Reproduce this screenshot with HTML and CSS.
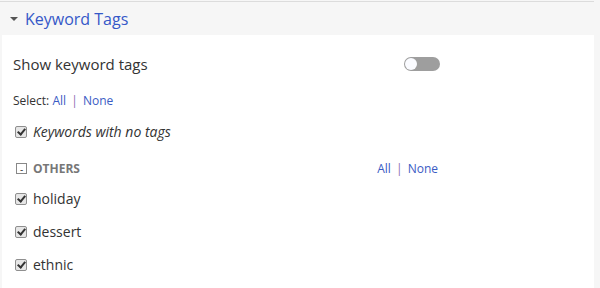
FILE: index.html
```html
<!DOCTYPE html>
<html>
<head>
  <meta charset="utf-8">
  <title>Keyword Tags</title>
  <link rel="stylesheet" href="styles.css">
</head>
<body>
  <div class="painel">
    <div class="cabecalho">
      <span class="seta"></span>
      <h2 class="titulo">Keyword Tags</h2>
    </div>

    <div class="conteudo">
      <div class="linha-toggle">
        <span class="rotulo">Show keyword tags</span>
        <span class="toggle"><span class="bolinha"></span></span>
      </div>

      <div class="selecionar">
        Select: <a class="link">All</a> <span class="sep">|</span> <a class="link">None</a>
      </div>

      <label class="item italico"><span class="caixa"></span>Keywords with no tags</label>

      <div class="grupo">
        <span class="grupo-nome"><span class="menos">-</span>OTHERS</span>
        <span class="grupo-links"><a class="link">All</a> <span class="sep">|</span> <a class="link">None</a></span>
      </div>

      <label class="item"><span class="caixa"></span>holiday</label>
      <label class="item"><span class="caixa"></span>dessert</label>
      <label class="item"><span class="caixa"></span>ethnic</label>
    </div>
  </div>
</body>
</html>
```

FILE: styles.css
```css
* {
  font-family: "Open Sans", Arial, sans-serif;
  box-sizing: border-box;
}

body {
  margin: 0;
  background-color: #f6f6f6;
  height: 288px;
  overflow: hidden;
}

.painel {
  margin-left: 2px;
  width: 592px;
  height: 288px;
  background-color: #fff;
}

.cabecalho {
  display: flex;
  align-items: center;
  height: 34px;
  padding-left: 10px;
  background-color: #f6f6f6;
  border-top: 1px solid #dcdcdc;
  margin-top: 1px;
  margin-left: -2px;
  width: 594px;
}
.seta {
  width: 0;
  height: 0;
  border-left: 4px solid transparent;
  border-right: 4px solid transparent;
  border-top: 4px solid #555;
  margin-right: 7px;
  margin-top: 1px;
}
.titulo {
  margin: 0;
  font-size: 16px;
  font-weight: 400;
  color: #3558c8;
}

.conteudo {
  width: 438px;
  padding: 0 0 0 11px;
}

.linha-toggle {
  display: flex;
  align-items: center;
  justify-content: space-between;
  height: 30px;
  margin-top: 14px;
}
.rotulo {
  font-size: 15px;
  color: #333;
}
.toggle {
  display: flex;
  align-items: center;
  width: 36px;
  height: 14px;
  border-radius: 7px;
  background-color: #9e9e9e;
}
.bolinha {
  width: 12px;
  height: 12px;
  border-radius: 50%;
  background-color: #fafbff;
  margin-left: 1px;
}

.selecionar {
  font-size: 12px;
  color: #333;
  margin-top: 13px;
  height: 18px;
  line-height: 18px;
}
.link {
  color: #3a5bc4;
}
.sep {
  color: #8c6bb1;
  margin: 0 2px;
}

.item {
  display: flex;
  align-items: center;
  height: 33px;
  font-size: 14px;
  color: #333;
}
.italico {
  font-style: italic;
  margin-top: 5px;
}
.caixa {
  position: relative;
  width: 12px;
  height: 12px;
  border: 1px solid #8f8f8f;
  border-radius: 2px;
  background-color: #e6e6e6;
  margin: 1px 6px 0 2px;
}
.caixa::after {
  content: "";
  position: absolute;
  left: 3px;
  top: 0px;
  width: 3px;
  height: 6px;
  border-right: 2px solid #333;
  border-bottom: 2px solid #333;
  transform: rotate(40deg);
}

.grupo {
  display: flex;
  align-items: center;
  justify-content: space-between;
  height: 27px;
  margin-top: 7px;
  padding-right: 2px;
}
.grupo-nome {
  display: flex;
  align-items: center;
  font-size: 12px;
  font-weight: 700;
  color: #777;
}
.menos {
  display: flex;
  align-items: center;
  justify-content: center;
  width: 11px;
  height: 11px;
  border: 1px solid #888;
  font-size: 10px;
  font-weight: 400;
  color: #333;
  line-height: 1;
  margin: 0 6px 0 3px;
}
.grupo-links {
  font-size: 12px;
}
```
